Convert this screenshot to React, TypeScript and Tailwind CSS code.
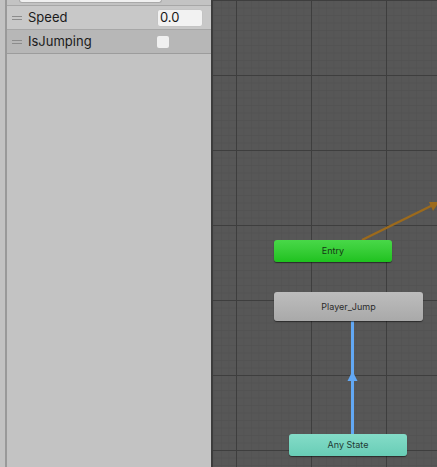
export default function App() {
  const font = { fontFamily: 'Inter, "Noto Sans", "Liberation Sans", sans-serif' };

  return (
    <div className="flex h-[467px] w-[437px] overflow-hidden bg-[#c2c2c2]" style={font}>
      {/* left edge strip */}
      <div className="w-[5px] bg-[#c2c2c2]" />
      <div className="w-[2px] bg-[#999999]" />

      {/* parameters panel */}
      <div className="flex w-[204px] flex-col bg-[#c3c3c3]">
        <div className="h-[5px]">
          <div className="ml-[12px] h-[3px] w-[143px] rounded-b-[3px] border-x border-b border-[#a9a9a9] bg-[#f0f0f0]" />
        </div>
        <div className="h-px bg-[#a7a7a7]" />
        <div className="flex h-[23px] items-center bg-[#c8c8c8] pl-[5px]">
          <div className="flex w-[10px] flex-col gap-[2px]">
            <div className="h-px bg-[#8c8c8c]" />
            <div className="h-px bg-[#8c8c8c]" />
          </div>
          <span className="ml-[6px] w-[122px] text-[13px] text-[#1b1b1b]">Speed</span>
          <div className="ml-[7px] flex h-[18px] w-[46px] items-center rounded-[3px] border border-[#c4c4c4] bg-[#f2f2f2] pl-[2px] text-[13px] text-[#161616]">
            0.0
          </div>
        </div>
        <div className="h-px bg-[#a7a7a7]" />
        <div className="flex h-[23px] items-center bg-[#b7b7b7] pl-[5px]">
          <div className="flex w-[10px] flex-col gap-[2px]">
            <div className="h-px bg-[#8c8c8c]" />
            <div className="h-px bg-[#8c8c8c]" />
          </div>
          <span className="ml-[6px] w-[122px] text-[13px] text-[#1b1b1b]">IsJumping</span>
          <div className="ml-[7px] h-[12px] w-[12px] rounded-[2px] bg-[#f0f0f0]" />
        </div>
        <div className="h-px bg-[#9c9c9c]" />
      </div>

      {/* splitter */}
      <div className="w-[2px] bg-[#3c3c3c]" />

      {/* graph canvas */}
      <div className="relative flex-1 bg-[#575757]">
        <svg className="absolute inset-0 h-full w-full" xmlns="http://www.w3.org/2000/svg">
          <defs>
            <pattern id="minor" x="0.5" y="0" width="7.5" height="7.5" patternUnits="userSpaceOnUse">
              <path d="M 0 0 L 0 7.5 M 0 0 L 7.5 0" stroke="#505050" strokeWidth="1" fill="none" />
            </pattern>
            <pattern id="major" x="23" y="0" width="75" height="75" patternUnits="userSpaceOnUse">
              <path d="M 0.5 0 L 0.5 75 M 0 0.5 L 75 0.5" stroke="#3e3e3e" strokeWidth="1" fill="none" />
            </pattern>
          </defs>
          <rect width="100%" height="100%" fill="url(#minor)" />
          <rect width="100%" height="100%" fill="url(#major)" />

          {/* entry transition */}
          <line x1="149" y1="240" x2="222" y2="204" stroke="#9c6a1c" strokeWidth="2.5" />
          <polygon points="226,202 216,202 220,211" fill="#9c6a1c" />

          {/* any state transition */}
          <line x1="139.5" y1="321" x2="139.5" y2="434" stroke="#62a8f4" strokeWidth="3" />
          <polygon points="139.5,371 134.5,381 144.5,381" fill="#62a8f4" />
        </svg>

        <div className="absolute left-[61px] top-[240px] flex h-[22px] w-[118px] items-center justify-center rounded-[3px] bg-gradient-to-b from-[#48d848] to-[#1ec21e] text-[9px] text-[#163816] shadow-[0_1px_1px_rgba(0,0,0,0.5)]">
          Entry
        </div>

        <div className="absolute left-[61px] top-[292px] flex h-[29px] w-[149px] items-center justify-center rounded-[3px] bg-gradient-to-b from-[#bdbdbd] to-[#a9a9a9] text-[9px] text-[#2b2b2b] shadow-[0_1px_1px_rgba(0,0,0,0.5)]">
          Player_Jump
        </div>

        <div className="absolute left-[76px] top-[434px] flex h-[22px] w-[118px] items-center justify-center rounded-[3px] bg-gradient-to-b from-[#84dcc8] to-[#68cdb6] text-[9px] text-[#1f3a34] shadow-[0_1px_1px_rgba(0,0,0,0.5)]">
          Any State
        </div>
      </div>
    </div>
  );
}
